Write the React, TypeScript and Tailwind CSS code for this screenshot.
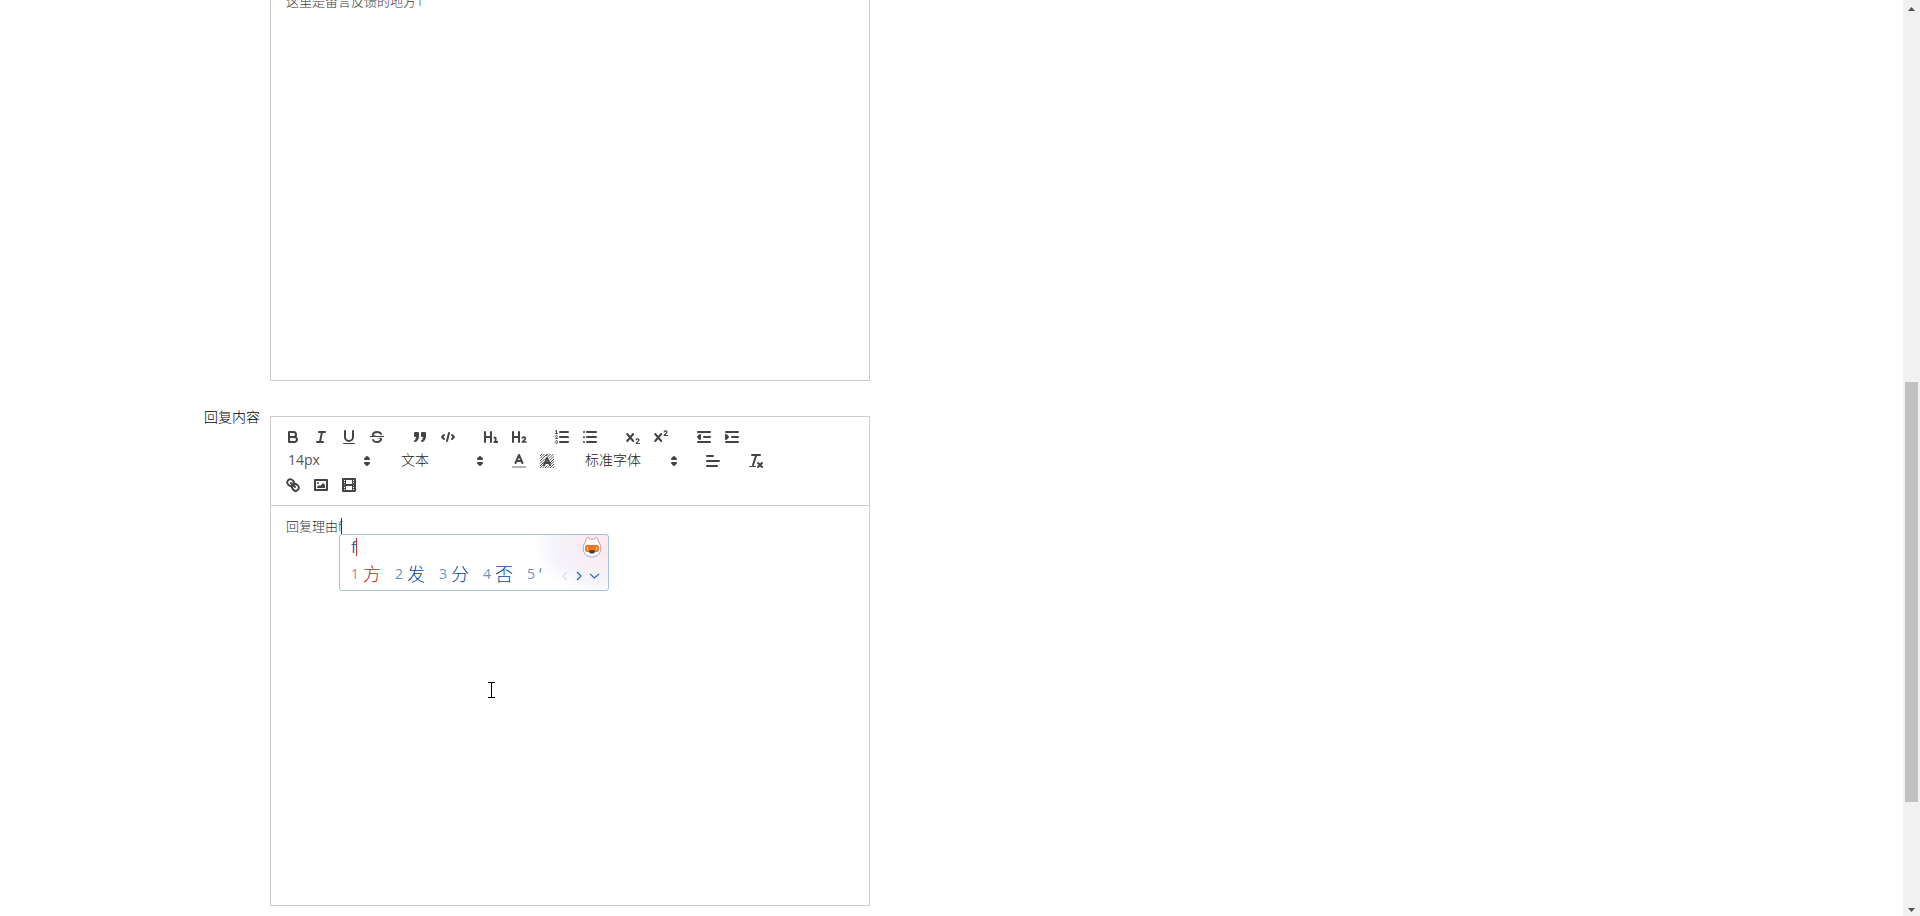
import type { ReactNode } from "react";

const fontStack = 'font-["Open_Sans","Noto_Sans_CJK_SC",sans-serif]';

interface ToolButtonProps {
  label: string;
  children: ReactNode;
}

function ToolButton({ label, children }: ToolButtonProps) {
  return (
    <button type="button" aria-label={label} className="h-6 w-7 px-[5px] py-[3px]">
      <svg
        viewBox="0 0 18 18"
        className="h-[18px] w-[18px]"
        fill="none"
        stroke="#444"
        strokeWidth="2"
        strokeLinecap="round"
        strokeLinejoin="round"
      >
        {children}
      </svg>
    </button>
  );
}

interface PickerProps {
  label: string;
  value: string;
  className: string;
}

function Picker({ label, value, className }: PickerProps) {
  return (
    <span className={`relative mr-[15px] h-6 ${className}`}>
      <select
        aria-label={label}
        defaultValue={value}
        className="block h-[22px] w-full appearance-none bg-transparent pl-[9px] text-sm leading-[22px] outline-none"
      >
        <option>{value}</option>
      </select>
      <svg viewBox="0 0 18 18" className="pointer-events-none absolute top-[3px] right-px h-[18px] w-[18px]">
        <g fill="#444" stroke="#444" strokeWidth="2" strokeLinecap="round" strokeLinejoin="round">
          <polygon points="7 11 9 13 11 11 7 11" />
          <polygon points="7 7 9 5 11 7 7 7" />
        </g>
      </svg>
    </span>
  );
}

function Group({ children }: { children: ReactNode }) {
  return <span className="mr-[15px] flex">{children}</span>;
}

function Toolbar() {
  return (
    <div className="flex flex-wrap border border-[#ccc] p-2">
      <Group>
        <ToolButton label="加粗">
          <path d="M5,4H9.5A2.5,2.5,0,0,1,12,6.5v0A2.5,2.5,0,0,1,9.5,9H5A0,0,0,0,1,5,9V4A0,0,0,0,1,5,4Z" />
          <path d="M5,9h5.5A2.5,2.5,0,0,1,13,11.5v0A2.5,2.5,0,0,1,10.5,14H5a0,0,0,0,1,0,0V9A0,0,0,0,1,5,9Z" />
        </ToolButton>
        <ToolButton label="斜体">
          <path d="M7 4H13M5 14H11M8 14L10 4" />
        </ToolButton>
        <ToolButton label="下划线">
          <path d="M5,3V9a4.012,4.012,0,0,0,4,4H9a4.012,4.012,0,0,0,4-4V3" />
          <rect x="3" y="15" width="12" height="1" rx="0.5" fill="#444" stroke="none" />
        </ToolButton>
        <ToolButton label="删除线">
          <path strokeWidth="1" d="M15.5 8.5H2.5" />
          <path
            fill="#444"
            stroke="none"
            d="M9.007,8C6.542,7.791,6,7.519,6,6.5,6,5.792,7.283,5,9,5c1.571,0,2.765.679,2.969,1.309a1,1,0,0,0,1.9-.617C13.356,4.106,11.354,3,9,3,6.2,3,4,4.538,4,6.5a3.2,3.2,0,0,0,.5,1.843Z"
          />
          <path
            fill="#444"
            stroke="none"
            d="M8.984,10C11.457,10.208,12,10.479,12,11.5c0,0.708-1.283,1.5-3,1.5-1.571,0-2.765-.679-2.969-1.309a1,1,0,1,0-1.9.617C4.644,13.894,6.646,15,9,15c2.8,0,5-1.538,5-3.5a3.2,3.2,0,0,0-.5-1.843Z"
          />
        </ToolButton>
      </Group>
      <Group>
        <ToolButton label="引用">
          <g fill="#444">
            <rect x="4" y="5" width="3" height="3" />
            <rect x="11" y="5" width="3" height="3" />
            <path d="M7,8c0,4.031-3,5-3,5M14,8c0,4.031-3,5-3,5" />
            <path d="M7 8L6 11L5 11Z M14 8L13 11L12 11Z" strokeWidth="1" />
          </g>
        </ToolButton>
        <ToolButton label="代码">
          <path d="M5 7L3 9L5 11M13 7L15 9L13 11M10 5L8 13" />
        </ToolButton>
      </Group>
      <Group>
        <ToolButton label="标题 1">
          <path d="M3 4V14M9 4V14M3 9H9" />
          <path strokeWidth="1.8" strokeLinecap="butt" d="M11.6 9.6H13.6V14M11.6 14H16" />
        </ToolButton>
        <ToolButton label="标题 2">
          <path d="M3 4V14M9 4V14M3 9H9" />
          <path strokeWidth="1.7" d="M12.2 9.8C13.8 8.4 16.2 9.4 15 11.4L12.4 14H15.9" />
        </ToolButton>
      </Group>
      <Group>
        <ToolButton label="有序列表">
          <path d="M7 4H15M7 9H15M7 14H15" />
          <path strokeWidth="1" d="M2.5 5.5H4.5M2.5 3L3.5 2.5V5.5" />
          <path
            strokeWidth="1"
            d="M4.5,10.5h-2c0-.234,1.85-1.076,1.85-2.234A0.959,0.959,0,0,0,2.5,8.156"
          />
          <path
            strokeWidth="1"
            d="M2.5,14.846a0.959,0.959,0,0,0,1.85-.109A0.7,0.7,0,0,0,3.75,14a0.688,0.688,0,0,0,.6-0.736,0.959,0.959,0,0,0-1.85-.109"
          />
        </ToolButton>
        <ToolButton label="无序列表">
          <path d="M6 4H15M6 9H15M6 14H15M3 4H3M3 9H3M3 14H3" />
        </ToolButton>
      </Group>
      <Group>
        <ToolButton label="下标">
          <path d="M3.2 6L9.2 13M9.2 6L3.2 13" />
          <path strokeWidth="1.2" d="M12.2 11.8C12.6 10.4 15.2 10.5 15 12.2C14.8 13.4 12.6 14 12.2 15.5H15.6" />
        </ToolButton>
        <ToolButton label="上标">
          <path d="M3.2 6L9.2 13M9.2 6L3.2 13" />
          <path strokeWidth="1.2" d="M12.2 3.8C12.6 2.4 15.2 2.5 15 4.2C14.8 5.4 12.6 6 12.2 7.5H15.6" />
        </ToolButton>
      </Group>
      <Group>
        <ToolButton label="减少缩进">
          <path d="M3 14H15M3 4H15M9 9H15" />
          <polygon points="5 7 5 11 3 9 5 7" fill="#444" />
        </ToolButton>
        <ToolButton label="增加缩进">
          <path d="M3 14H15M3 4H15M9 9H15" />
          <polygon points="3 7 3 11 5 9 3 7" fill="#444" />
        </ToolButton>
      </Group>
      <Picker label="字号" value="14px" className="w-[98px] font-normal text-[#555]" />
      <Picker label="标题" value="文本" className="w-[98px] text-[#222]" />
      <Group>
        <ToolButton label="文字颜色">
          <path strokeLinecap="butt" d="M2 15H16" opacity="0.4" />
          <path d="M5.5 11L9 3L12.5 11M11.63 9H6.38" />
        </ToolButton>
        <ToolButton label="背景颜色">
          <path
            strokeWidth="0.9"
            strokeLinecap="butt"
            d="M2 4L4 2M2 6.5L6.5 2M2 9L9 2M2 11.5L7 6.5M2 14L6 10M2 16L5 13M4.5 16L7 13.5M7 16L9.5 13.5M9.5 16L12 13.5M12 16L16 12M14.5 16L16 14.5M12 13L16 9.5M12 11L16 7M11.5 8.5L16 4.5M11 6.5L15.5 2M9.5 5L12.5 2M8 4L10.5 2"
          />
          <path d="M6 13L9 6L12 13M11 11H7" />
        </ToolButton>
      </Group>
      <Picker label="字体" value="标准字体" className="w-[108px] text-[#222]" />
      <Group>
        <ToolButton label="对齐">
          <path d="M3 9H15M3 14H13M3 4H9" />
        </ToolButton>
      </Group>
      <Group>
        <ToolButton label="清除格式">
          <path d="M5 3H13M6 13L9.35 3M11 11L15 15M15 11L11 15" />
          <rect x="2" y="14" width="7" height="1" rx="0.5" fill="#444" stroke="none" />
        </ToolButton>
      </Group>
      <Group>
        <ToolButton label="链接">
          <path d="M7 7L11 11" />
          <path d="M8.9,4.577a3.476,3.476,0,0,1,.36,4.679A3.476,3.476,0,0,1,4.577,8.9C3.185,7.5,2.035,6.4,4.217,4.217S7.5,3.185,8.9,4.577Z" />
          <path d="M13.423,9.1a3.476,3.476,0,0,0-4.679-.36,3.476,3.476,0,0,0,.36,4.679c1.392,1.392,2.5,2.542,4.679.36S14.815,10.5,13.423,9.1Z" />
        </ToolButton>
        <ToolButton label="图片">
          <rect x="3" y="4" width="12" height="10" />
          <circle cx="6" cy="7" r="1" fill="#444" stroke="none" />
          <polyline points="5 12 5 11 7 9 8 10 11 7 13 9 13 12 5 12" fill="#444" stroke="none" />
        </ToolButton>
        <ToolButton label="视频">
          <rect x="3" y="3" width="12" height="12" />
          <path strokeWidth="1" d="M5.5 3V15M12.5 3V15" />
          <path d="M5 9H13" />
          <path strokeWidth="1" d="M3 5.5H5M3 7.5H5M3 10.5H5M3 12.5H5M13 5.5H15M13 7.5H15M13 10.5H15M13 12.5H15" />
        </ToolButton>
      </Group>
    </div>
  );
}

const candidates = ["方", "发", "分", "否", "‘"];

function ImePopup() {
  return (
    <div className="absolute top-7 left-[69px] h-[57px] w-[270px] overflow-hidden rounded-[3px] border border-[#a3c3dc] bg-white bg-[radial-gradient(ellipse_75px_50px_at_100%_20%,#fde8ec,#f5f3fb_70%,#ffffff)] pt-[3px] pl-[11px]">
      <div className="flex h-[18px] items-center text-base font-normal text-[#2467b8]">
        <span>f</span>
        <span className="h-[18px] w-px bg-[#c03030]" />
      </div>
      <ol className="mt-1 flex h-7 items-center">
        {candidates.map((word, i) => (
          <li
            key={word}
            className={i === 0 ? "flex w-11 items-center gap-1 text-[#c41d0e]" : "flex w-11 items-center gap-1 text-[#004a9c]"}
          >
            <span className="text-sm font-normal opacity-60">{i + 1}</span>
            <span className="text-lg">{word}</span>
          </li>
        ))}
      </ol>
      <svg viewBox="0 0 20 22" className="absolute top-px right-[6px] h-[22px] w-5">
        <defs>
          <linearGradient id="mascot" x1="0" y1="0" x2="0" y2="1">
            <stop offset="0" stopColor="#e77f8c" />
            <stop offset="1" stopColor="#7fa6dd" />
          </linearGradient>
        </defs>
        <path
          d="M3.5 6C4 2.5 5 1 6.5 2Q8 3.4 10 3.2Q12 3.4 13.5 2C15 1 16 2.5 16.5 6C21 11 19 21 10 21C1 21 -1 11 3.5 6Z"
          fill="#fff"
          stroke="url(#mascot)"
          strokeWidth="0.9"
        />
        <rect x="3" y="9" width="14" height="7" rx="2.5" fill="#ee7422" />
        <path d="M5.5 11V14M14.5 11V14" stroke="#fbd0a8" strokeWidth="1.2" />
        <ellipse cx="10" cy="15.8" rx="3" ry="1.8" fill="#3d3d45" />
      </svg>
      <svg
        viewBox="0 0 42 12"
        fill="none"
        stroke="#2a6cb5"
        strokeWidth="1.3"
        className="absolute right-[6px] bottom-2 h-3 w-[42px]"
      >
        <path d="M7 2L3 6L7 10" stroke="#ddd" />
        <path d="M17 2L21 6L17 10" />
        <path d="M30 4L34.5 8L39 4" />
      </svg>
    </div>
  );
}

function Scrollbar() {
  return (
    <div aria-hidden="true" className="flex w-[17px] shrink-0 flex-col items-center bg-[#f1f1f1]">
      <svg viewBox="0 0 17 17" className="h-[17px] w-[17px]" fill="#505050">
        <path d="M5 11L8.5 7L12 11Z" />
      </svg>
      <div className="h-[365px]" />
      <div className="h-[420px] w-[13px] bg-[#c1c1c1]" />
      <svg viewBox="0 0 17 17" className="mt-auto h-[17px] w-[17px]" fill="#505050">
        <path d="M5 9L8.5 13L12 9Z" />
      </svg>
    </div>
  );
}

export default function App() {
  return (
    <div className={`flex h-screen overflow-hidden bg-white font-light ${fontStack}`}>
      <main className="min-w-0 flex-1 overflow-hidden">
        <div className="-mt-5 flex pl-[270px]">
          <textarea
            aria-label="留言内容"
            readOnly
            defaultValue="这里是留言反馈的地方1"
            className="h-[401px] w-[600px] resize-none border border-[#ccc] px-[15px] py-[11px] text-[13px] leading-[18px] text-[#333] outline-none"
          />
        </div>
        <div className="mt-[26px] flex gap-[10px]">
          <label htmlFor="reply" className="w-[260px] shrink-0 text-right text-sm leading-5 text-[#000]">
            回复内容
          </label>
          <div className="mt-[9px] w-[600px]">
            <Toolbar />
            <div className="relative">
              <textarea
                id="reply"
                defaultValue="回复理由f"
                className="block h-[400px] w-full resize-none border border-t-0 border-[#ccc] px-[15px] py-[11px] text-[13px] leading-[18px] text-[#333] outline-none"
              />
              <span className="absolute top-3 left-[71px] h-4 w-px bg-[#333]" />
              <ImePopup />
              {/* mouse pointer */}
              <svg viewBox="0 0 9 17" className="absolute top-[176px] left-[217px] h-[17px] w-[9px]" stroke="#000" fill="none">
                <path d="M1 0.5H8M1 15.5H8M4.5 1V15" />
              </svg>
            </div>
          </div>
        </div>
      </main>
      <Scrollbar />
    </div>
  );
}
